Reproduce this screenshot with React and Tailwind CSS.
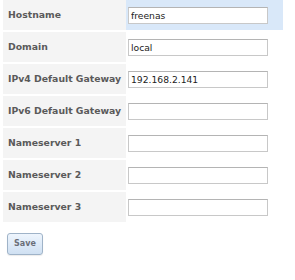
import { useState } from 'react';

const fields = [
  { name: 'hostname', label: 'Hostname', value: 'freenas' },
  { name: 'domain', label: 'Domain', value: 'local' },
  { name: 'ipv4gw', label: 'IPv4 Default Gateway', value: '192.168.2.141' },
  { name: 'ipv6gw', label: 'IPv6 Default Gateway', value: '' },
  { name: 'ns1', label: 'Nameserver 1', value: '' },
  { name: 'ns2', label: 'Nameserver 2', value: '' },
  { name: 'ns3', label: 'Nameserver 3', value: '' },
];

export default function App() {
  const [values, setValues] = useState(
    Object.fromEntries(fields.map(f => [f.name, f.value]))
  );
  const [active] = useState('hostname');

  return (
    <div className="w-[295px] h-[280px] bg-white font-['DejaVu_Sans',Verdana,sans-serif] overflow-hidden">
      <form className="pl-[3px]" onSubmit={(e) => e.preventDefault()}>
        <div className="flex flex-col gap-[2px] w-[280px]">
          {fields.map((f) => (
            <div key={f.name} className="flex h-[30px]">
              {/* Label */}
              <div className="w-[123px] shrink-0 bg-[#f4f4f4] flex items-center pl-[5px] text-[9.3px] font-bold text-[#5a5a5a] whitespace-nowrap">
                {f.label}
              </div>
              {/* Input */}
              <div className={`flex-1 flex items-center pl-[2px] ${active === f.name ? 'bg-[#d9e8f9]' : 'bg-white'}`}>
                <input
                  type="text"
                  value={values[f.name]}
                  onChange={(e) => setValues({ ...values, [f.name]: e.target.value })}
                  className="w-[140px] h-[17px] bg-white border border-[#c8c8c8] border-t-[#b4b4b4] px-[2px] text-[9.2px] text-[#222] outline-none"
                />
              </div>
            </div>
          ))}
        </div>

        <div className="pt-[7px] pl-[4px]">
          <button
            type="submit"
            className="w-[36px] h-[22px] rounded-[3px] border border-[#9fb3c8] bg-gradient-to-b from-[#eef5fd] to-[#cfe0f2] text-[8px] font-bold text-[#6b6f78] shadow-[0_1px_1px_rgba(0,0,0,0.08)]"
          >
            Save
          </button>
        </div>
      </form>
    </div>
  );
}
